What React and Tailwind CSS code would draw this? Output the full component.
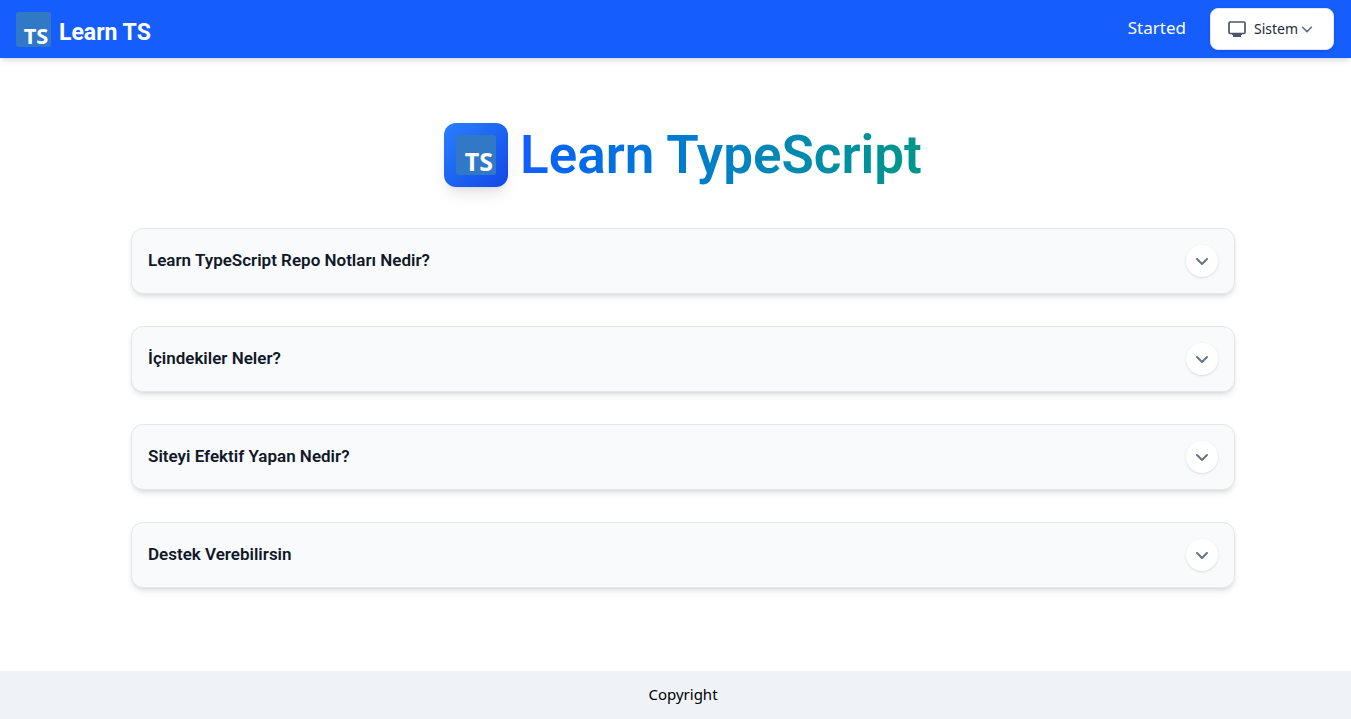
import { useState } from "react";

const items = [
  { title: "Learn TypeScript Repo Notları Nedir?" },
  { title: "İçindekiler Neler?" },
  { title: "Siteyi Efektif Yapan Nedir?" },
  { title: "Destek Verebilirsin" },
];

function TsLogo({ className }) {
  return (
    <svg viewBox="0 0 40 40" overflow="visible" className={className} aria-hidden="true">
      <rect width="40" height="40" rx="2.5" fill="#3178c6" />
      <text x="37" y="36" textAnchor="end" fill="#ffffff" fontSize="25" fontWeight="700" fontFamily="'Noto Sans', sans-serif">
        TS
      </text>
    </svg>
  );
}

function Chevron({ className }) {
  return (
    <svg
      viewBox="0 0 24 24"
      fill="none"
      stroke="currentColor"
      strokeWidth="3"
      strokeLinecap="round"
      strokeLinejoin="round"
      className={className}
      aria-hidden="true"
    >
      <path d="M4.500 9l7.500 7.500 7.500-7.500" />
    </svg>
  );
}

function MonitorIcon() {
  return (
    <svg viewBox="0 0 18 16" className="h-4 w-[18px]" aria-hidden="true">
      <rect x="1" y="1" width="16" height="11.5" rx="1.2" fill="none" stroke="currentColor" strokeWidth="1.7" />
      <path d="M4 12.5h10v1.5h-1v2H5v-2H4z" fill="currentColor" />
    </svg>
  );
}

function Card({ title }) {
  const [open, setOpen] = useState(false);
  return (
    <button
      type="button"
      aria-expanded={open}
      onClick={() => setOpen(!open)}
      className="flex w-full items-center justify-between rounded-xl border border-gray-200 bg-gray-50 p-4 text-left shadow-md"
    >
      <span className="pb-0.5 font-['Roboto',sans-serif] text-[17px] leading-6 font-semibold text-gray-900">{title}</span>
      <span className="flex size-8 items-center justify-center rounded-full bg-white text-gray-500 shadow-sm">
        <Chevron className={open ? "size-4 rotate-180" : "size-4"} />
      </span>
    </button>
  );
}

export default function App() {
  return (
    <div className="flex min-h-screen flex-col bg-white font-['Noto_Sans',sans-serif] text-black">
      <header className="flex items-center justify-between bg-[#155dfc] py-2 pr-[17px] pl-4 text-white shadow-md">
        <a href="#" className="flex items-center gap-2">
          <TsLogo className="size-[35px]" />
          <span className="pt-2 font-['Roboto',sans-serif] text-[23px] leading-8 font-bold">Learn TS</span>
        </a>
        <nav className="flex items-center gap-6">
          <a href="#started" className="pb-0.5 text-[17px] leading-6">Started</a>
          <button
            type="button"
            className="flex h-[42px] w-[124px] items-center rounded-lg border border-gray-200 bg-white px-[17px] text-sm text-gray-800 shadow-sm"
          >
            <span className="text-gray-600"><MonitorIcon /></span>
            <span className="ml-2">Sistem</span>
            <Chevron className="ml-0.5 size-3.5 text-gray-500" />
          </button>
        </nav>
      </header>

      <main className="flex-1 pt-[65px] pl-[15px]">
        <div className="mx-auto max-w-6xl px-6">
          <div className="flex items-center justify-center gap-3">
            <div className="flex size-16 items-center justify-center rounded-xl bg-linear-to-br from-[#2b7fff] to-[#1447e6] shadow-lg">
              <TsLogo className="size-10" />
            </div>
            <h1 className="bg-linear-to-r from-[#155dfc] to-[#009689] bg-clip-text font-['Roboto',sans-serif] text-[53px] leading-16 font-semibold text-transparent">
              Learn TypeScript
            </h1>
          </div>
          <div className="mt-[41px] flex flex-col gap-8">
            {items.map((item) => (
              <Card key={item.title} title={item.title} />
            ))}
          </div>
        </div>
      </main>

      <footer className="bg-[#eff3f8] pt-[11px] pb-[13px] pl-[15px] text-center text-[15px] leading-6">Copyright</footer>
    </div>
  );
}
